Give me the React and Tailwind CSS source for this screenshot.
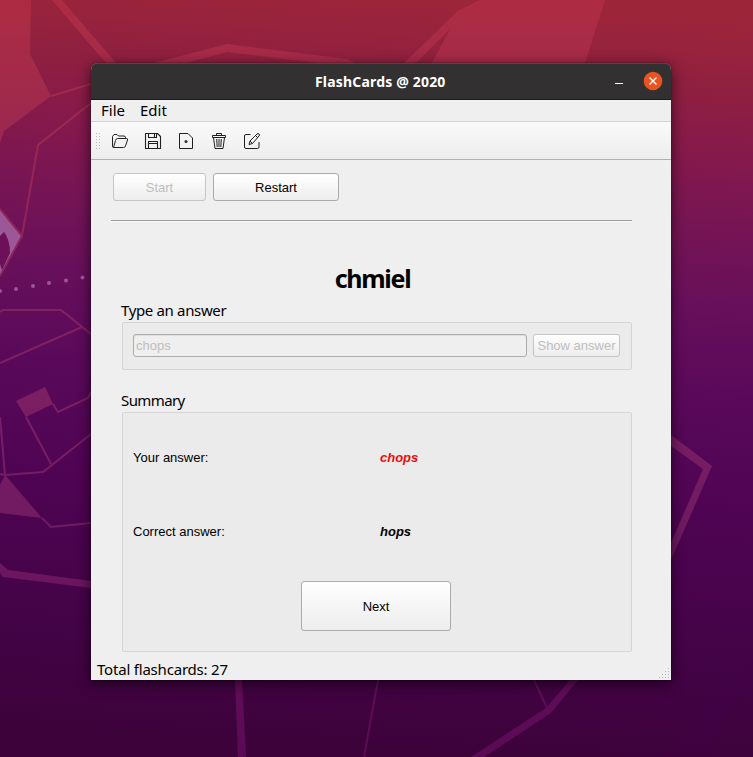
import React from "react";

function Wallpaper() {
  return (
    <svg className="absolute inset-0 h-full w-full" viewBox="0 0 753 757" preserveAspectRatio="none">
      <defs>
        <linearGradient id="base" gradientUnits="userSpaceOnUse" x1="400" y1="0" x2="357" y2="757">
          <stop offset="0" stopColor="#9d253a" />
          <stop offset="0.09" stopColor="#902040" />
          <stop offset="0.18" stopColor="#85194b" />
          <stop offset="0.27" stopColor="#771554" />
          <stop offset="0.37" stopColor="#68105a" />
          <stop offset="0.5" stopColor="#5a095a" />
          <stop offset="0.65" stopColor="#4f0453" />
          <stop offset="0.85" stopColor="#430346" />
          <stop offset="1" stopColor="#3c0239" />
        </linearGradient>
        <linearGradient id="light" gradientUnits="userSpaceOnUse" x1="0" y1="0" x2="0" y2="757">
          <stop offset="0" stopColor="#ae2c42" />
          <stop offset="0.12" stopColor="#a12a4b" />
          <stop offset="0.25" stopColor="#952459" />
          <stop offset="0.5" stopColor="#7d1f62" />
          <stop offset="0.7" stopColor="#701a62" />
          <stop offset="0.88" stopColor="#620d59" />
          <stop offset="1" stopColor="#5a0a54" />
        </linearGradient>
      </defs>
      <rect width="753" height="757" fill="url(#base)" />
      <g fill="url(#light)">
        <path d="M0 0H31L30 54L51 96L4 131L0 143Z" />
        <path d="M52 0H62L116 63H106Z" />
        <path d="M154 63L227 44L347 59L355 63H318L227 52L186 63Z" />
        <path d="M404 63L458 11L480 0H605L585 63H432L450 29L416 63Z" />
        <path d="M671 435L712 466L671 560V543L703 469L671 446Z" />
        <path d="M16 401L45 387L53 404L26 417Z" />
        <path d="M5 475L42 518L0 513V485Z" />
        <path d="M0 563L8 570L91 581V588L3 577L0 573Z" />
        <path d="M235 680H242L246 757H238Z" />
        <path d="M570 680H578L551 713L484 757H471L546 708Z" />
      </g>
      <path d="M0 209L22 236L0 276Z" fill="#9c5798" />
      <path d="M0 236L4 232Q10 240 10 253L2 270L0 264Z" fill="#6b1059" />
      <g fill="none" stroke="url(#light)" strokeWidth="2">
        <path d="M51 96L91 84M91 103L38 145L22 236L0 209M22 236L0 276" />
        <path d="M0 312L3 310H61L91 334M0 363L82 327" />
        <path d="M53 404L58 412L88 398L91 392M26 417L51 464M0 417L5 475L43 472L91 434M42 518L51 527L91 523M0 474L5 475" />
        <path d="M378 680L364 757M534 680L547 708" />
      </g>
      <g fill="#9c5798">
        <circle cx="0" cy="291" r="2" />
        <circle cx="16" cy="289" r="2" />
        <circle cx="33" cy="286" r="2" />
        <circle cx="49" cy="283" r="2" />
        <circle cx="66" cy="280.500" r="2" />
        <circle cx="82.500" cy="277.500" r="2" />
      </g>
      <path d="M753 655L662 757H705L753 665Z" fill="#4a0458" opacity=".12" />
    </svg>
  );
}

function Icon({ children }) {
  return (
    <svg className="h-[18px] w-[18px] shrink-0" viewBox="0 0 18 18" fill="none" stroke="#202020" strokeWidth="1" strokeLinejoin="round">
      {children}
    </svg>
  );
}

function Toolbar() {
  return (
    <div className="flex h-[39px] items-center border-t border-b border-t-[#d2d2d2] border-b-[#b1b1b1] bg-linear-to-b from-[#fafafa] to-[#ededed] pl-[5px]">
      <svg className="mr-[6px] h-[17px] w-[5px]" viewBox="0 0 5 17" fill="#bcbcbc">
        {[1, 4, 7, 10, 13, 16].map((y) => (
          <path key={y} d={`M0 ${y}h1v1H0zM3 ${y}h1v1H3z`} />
        ))}
      </svg>
      <div className="ml-1 flex gap-[15px]">
        <Icon>
          <path d="M2.500 15.500Q1.500 15.500 1.500 14.500V4.500L3 2.500H6L7.500 4H13Q14.500 4 14.500 6M2.500 15.500L4.500 8.500Q5 6.500 6.500 6.500H15.500Q17 6.500 16.500 8L14.500 14Q14 15.500 12.500 15.500Z" />
        </Icon>
        <Icon>
          <path d="M1.500 1.500H13.500L16.500 4.500V16.500H1.500ZM4.500 1.500V5.500H12.500V1.500M10.500 2V5M4.500 16.500V9.500H13.500V16.500M5 11.500H13" strokeWidth="1.100" />
        </Icon>
        <Icon>
          <path d="M2.500 1.500H11L15.500 6V16.500H2.500Z" />
          <circle cx="9" cy="9.500" r="1.500" fill="#303030" stroke="none" />
        </Icon>
        <Icon>
          <path d="M2.500 3.500H15.500V5.500H2.500ZM6.500 3.500V1.500H11.500V3.500M3.500 5.500L5 16.500H13L14.500 5.500M6.700 7L7.200 15M9 7V15M11.300 7L10.800 15" />
        </Icon>
        <Icon>
          <path d="M7.500 2.500H3Q1.500 2.500 1.500 4V15Q1.500 16.500 3 16.500H14.500Q16 16.500 16 15V10M6 12.500L7 9L14 2Q15 1 16 2Q17 3 16 4L9.500 11.500ZM12.500 3.500L14.500 5.500M7 9L9.500 11.500" />
        </Icon>
      </div>
    </div>
  );
}

const button = "rounded-[3px] border bg-linear-to-b from-white to-[#ededed] text-center text-[13px]";
const group = "rounded-[2px] border border-[#d5d5d5] bg-[#ebebeb]";
const ui = "font-['Noto_Sans','Open_Sans',sans-serif]";

export default function App() {
  return (
    <div className="relative h-[757px] w-[753px] overflow-hidden pt-[63px] pl-[91px] font-['Liberation_Sans',Arial,sans-serif] text-black">
      <Wallpaper />
      <main className="relative flex h-[617px] w-[580px] flex-col overflow-hidden rounded-t-[7px] bg-[#efefef] shadow-[0_3px_14px_rgba(0,0,0,0.65),0_0_1px_#000]">
        <header className={`flex h-[37px] shrink-0 items-center border-t border-b border-t-[#4a4848] border-b-[#1d1c1c] bg-[#333031] text-white ${ui}`}>
          <h1 className="ml-[224px] w-[133px] text-[14px] leading-5 font-bold tracking-[0.18px] whitespace-nowrap">FlashCards @ 2020</h1>
          <span className="mt-[4px] ml-[167px] h-px w-2 bg-white" />
          <svg className="mb-[2px] ml-[20px] h-5 w-5" viewBox="0 0 20 20">
            <circle cx="10" cy="10" r="9.300" fill="#e95420" />
            <path d="M6.500 6.500L13.500 13.500M13.500 6.500L6.500 13.500" stroke="#fff" strokeWidth="1.400" />
          </svg>
        </header>
        <nav className={`flex h-[21px] shrink-0 gap-[14px] pl-[10px] text-[15px] leading-[21px] ${ui}`}>
          <span className="w-[25px]">File</span>
          <span>Edit</span>
        </nav>
        <Toolbar />
        <section className="flex flex-1 flex-col pt-[13px] pl-[20px]">
          <div className="ml-[2px] flex gap-[7px]">
            <button disabled className={`${button} h-7 w-[93px] border-[#c5c5c5] pt-[2px] text-[#bebebe]`}>Start</button>
            <button className={`${button} h-7 w-[126px] border-[#ababab] pt-[2px]`}>Restart</button>
          </div>
          <hr className="mt-[19px] h-[2px] w-[521px] border-t border-b border-t-[#9b9b9b] border-b-[#fafafa]" />
          <h2 className={`mt-[39px] w-[523px] text-center text-[25px] leading-[34px] font-bold tracking-[-1.3px] ${ui}`}>chmiel</h2>
          <h3 className={`mt-[4px] ml-[10px] text-[15px] leading-[22px] tracking-[-0.35px] ${ui}`}>Type an answer</h3>
          <div className={`${group} mt-px ml-[11px] flex h-[48px] w-[510px] gap-[6px] px-[10px] py-[11px]`}>
            <input disabled defaultValue="chops" className="h-[23px] w-[394px] rounded-[3px] border border-[#ababab] bg-[#efefef] px-[2px] text-[13px] text-[#bebebe] shadow-[inset_0_1px_0_#dfdfdf]" />
            <button disabled className={`${button} h-[23px] w-[87px] border-[#c5c5c5] whitespace-nowrap text-[#bebebe]`}>Show answer</button>
          </div>
          <h3 className={`mt-[19px] ml-[10px] text-[15px] leading-[22px] tracking-[-0.6px] ${ui}`}>Summary</h3>
          <div className={`${group} mt-px ml-[11px] flex h-[240px] w-[510px] flex-col pl-[10px]`}>
            <div className="mt-[35px] flex h-[20px] text-[13px] leading-5">
              <span className="w-[247px]">Your answer:</span>
              <span className="font-bold text-[#f00b0b] italic">chops</span>
            </div>
            <div className="mt-[54px] flex h-[20px] text-[13px] leading-5">
              <span className="w-[247px]">Correct answer:</span>
              <span className="font-bold italic">hops</span>
            </div>
            <button className={`${button} mt-[39px] ml-[168px] h-[50px] w-[150px] border-[#ababab] pt-[2px]`}>Next</button>
          </div>
        </section>
        <footer className={`flex h-[20px] shrink-0 items-end justify-between pl-[6px] text-[15px] leading-5 tracking-[-0.2px] ${ui}`}>
          <span className="mb-px">Total flashcards: 27</span>
          <svg className="mr-[1px] mb-[1px] h-[12px] w-[12px]" viewBox="0 0 12 12" fill="#b8b8b8">
            <path d="M10 1h1v1h-1zM7 4h1v1H7zM10 4h1v1h-1zM4 7h1v1H4zM7 7h1v1H7zM10 7h1v1h-1zM1 10h1v1H1zM4 10h1v1H4zM7 10h1v1H7zM10 10h1v1h-1z" />
          </svg>
        </footer>
      </main>
    </div>
  );
}
